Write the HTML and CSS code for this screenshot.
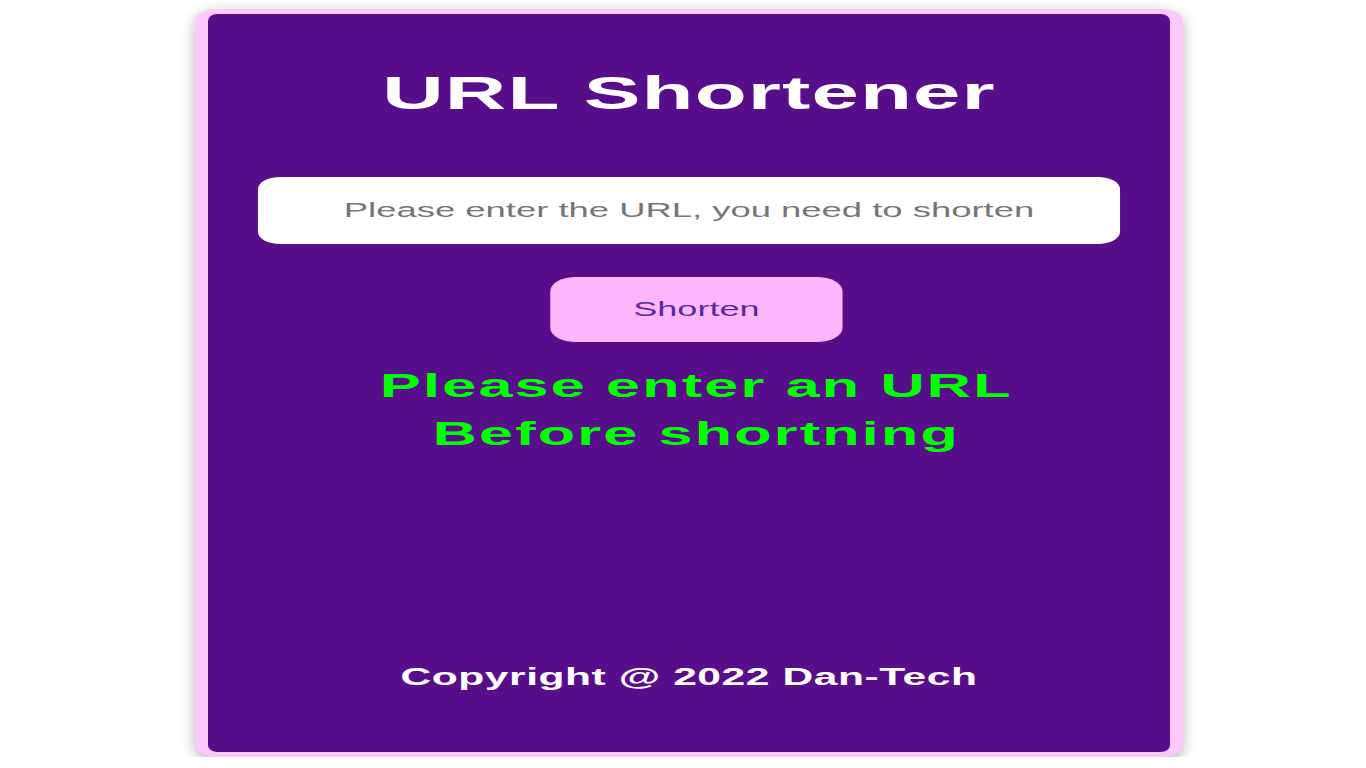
FILE: index.html
```html
<!DOCTYPE html>
<html lang="en">
<head>
<meta charset="utf-8">
<title>URL Shortener</title>
<link rel="stylesheet" href="styles.css">
</head>
<body>
  <main class="card">
    <h1 class="title">URL Shortener</h1>
    <form class="form" onsubmit="return false">
      <input class="url-input" type="text" placeholder="Please enter the URL, you need to shorten">
      <button class="btn" type="submit">Shorten</button>
    </form>
    <p class="message">Please enter an URL<br>Before shortning</p>
    <footer class="footer">Copyright @ 2022 Dan-Tech</footer>
  </main>
</body>
</html>
```

FILE: styles.css
```css
html, body {
  margin: 0;
  padding: 0;
  background: #ffffff;
  overflow: hidden;
}

body {
  padding-left: 11px;
  padding-top: 9px;
  font-family: "Liberation Sans", Arial, sans-serif;
}

.card {
  box-sizing: border-box;
  width: 534px;
  height: 748px;
  margin: 0 auto;
  background: #580d8b;
  border-style: solid;
  border-color: #fdc9fd;
  border-width: 5px 7px;
  border-radius: 12px;
  box-shadow: 0 4px 10px rgba(0, 0, 0, 0.3);
  display: flex;
  flex-direction: column;
  align-items: center;
  padding: 54px 0 62px;
  transform: scaleX(1.85);
  transform-origin: center center;
}

.title {
  margin: 0;
  color: #ffffff;
  font-size: 46px;
  line-height: 50px;
  font-weight: bold;
  letter-spacing: 0.6px;
}

.form {
  display: flex;
  flex-direction: column;
  align-items: center;
  width: 100%;
  margin-top: 59px;
}

.url-input {
  box-sizing: border-box;
  width: 466px;
  height: 67px;
  border: none;
  border-radius: 12px;
  background: #ffffff;
  font-family: "Liberation Sans", Arial, sans-serif;
  font-size: 19.7px;
  text-align: center;
  color: #333333;
  outline: none;
  padding: 0 10px;
}

.url-input::placeholder {
  color: #767676;
}

.btn {
  box-sizing: border-box;
  width: 158px;
  height: 65px;
  margin-top: 33px;
  margin-left: 8px;
  border: none;
  border-radius: 14px;
  background: #fcb6fc;
  color: #5a2a9c;
  font-family: "Liberation Sans", Arial, sans-serif;
  font-size: 19.5px;
  cursor: pointer;
}

.message {
  margin: 20px 0 0;
  padding-left: 8px;
  color: #00ff00;
  font-size: 33px;
  line-height: 48px;
  font-weight: bold;
  letter-spacing: 1.2px;
  text-align: center;
}

.footer {
  margin-top: auto;
  color: #ffffff;
  font-size: 23px;
  line-height: 26px;
  font-weight: bold;
  letter-spacing: 0.3px;
}
```
